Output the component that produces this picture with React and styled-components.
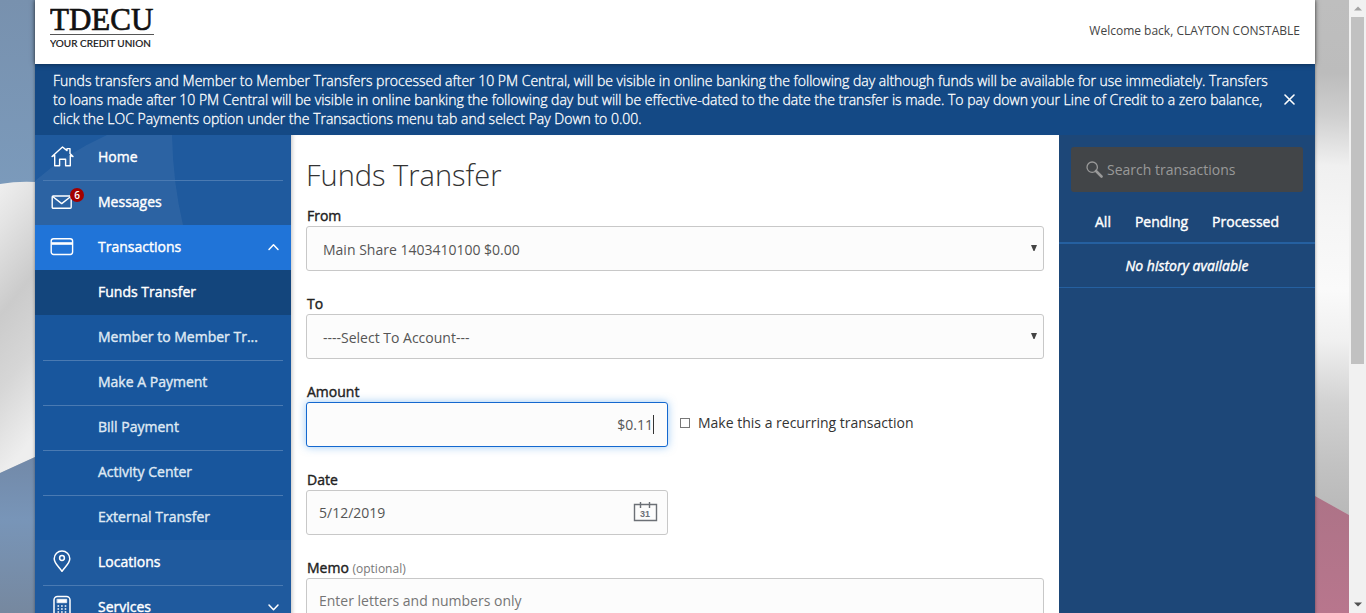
import React from "react";
import styled, { createGlobalStyle, css } from "styled-components";

const sans = '"Open Sans", "Noto Sans", sans-serif';

const GlobalStyle = createGlobalStyle`
  *, *::before, *::after { box-sizing: border-box; }
  body { margin: 0; font-family: ${sans}; font-size: 14px; line-height: 19px; color: #333; }
  button, input, select { font: inherit; color: inherit; }
  h1, p, ul { margin: 0; padding: 0; }
`;

/* ---------- page frame ---------- */

const Shell = styled.div`
  position: relative;
  display: flex;
  height: 100vh;
  overflow: hidden;
`;

const Backdrop = styled.div`
  position: absolute;
  inset: 0 17px 0 0;
  display: flex;
  justify-content: space-between;
  background: #c9c9c9;
`;

const Viewport = styled.div`
  position: relative;
  flex: 1;
  min-width: 0;
  padding: 0 34px 0 35px;
  overflow-y: auto;
  scrollbar-width: none;
`;

const Page = styled.div`
  display: flex;
  flex-direction: column;
  min-height: 100%;
  box-shadow: 0 0 3px rgba(0, 0, 0, 0.4);
`;

const ScrollBar = styled.div`
  position: relative;
  display: flex;
  flex-direction: column;
  justify-content: space-between;
  width: 17px;
  background: #f1f1f1;
`;

const ScrollButton = styled.button`
  display: flex;
  align-items: center;
  justify-content: center;
  height: 17px;
  padding: 0;
  border: 0;
  background: transparent;
`;

const ScrollTrack = styled.div`
  flex: 1;
  padding: 0 2px;
`;

const ScrollThumb = styled.div`
  height: 60%;
  background: #c1c1c1;
`;

/* ---------- header and notice ---------- */

const Header = styled.header`
  position: relative;
  z-index: 1;
  display: flex;
  align-items: center;
  justify-content: space-between;
  height: 64px;
  padding: 0 15px;
  background: #fff;
  box-shadow: 0 0 5px rgba(0, 0, 0, 0.5);
`;

const LogoLink = styled.a`
  display: block;
  align-self: flex-start;
  height: 50px;
`;

const Welcome = styled.p`
  padding-bottom: 4px;
  font-size: 12px;
  color: #444;
`;

const Notice = styled.section`
  display: flex;
  align-items: center;
  justify-content: space-between;
  padding: 7px 16px 7px 18px;
  background: #144985;
  color: #fff;
`;

const NoticeText = styled.p`
  max-width: 1216px;
  font-weight: 300;
  -webkit-text-stroke: 0.3px currentColor;
`;

const CloseButton = styled.button`
  display: flex;
  padding: 4px;
  border: 0;
  background: none;
  cursor: pointer;
`;

const Columns = styled.div`
  flex: 1;
  display: grid;
  grid-template-columns: 256px minmax(0, 1fr) 256px;
`;

/* ---------- navigation ---------- */

const Nav = styled.nav`
  position: relative;
  background: #1f5a9e;
`;

const NavArt = styled.svg`
  position: absolute;
  top: 0;
  left: 0;
`;

const NavList = styled.ul`
  position: relative;
  list-style: none;
`;

const SubList = styled.ul`
  list-style: none;
  background: #18569d;
`;

const NavItem = styled.li`
  position: relative;

  ${(p) =>
    p.$ruled &&
    css`
      &::after {
        content: "";
        position: absolute;
        right: 8px;
        bottom: -1px;
        left: 8px;
        height: 1px;
        background: #4a7ab2;
      }
    `}
`;

const navTone = {
  plain: css`background: transparent; color: #fff;`,
  open: css`background: #2074d8; color: #fff;`,
  current: css`background: #13457c; color: #fff;`,
  sub: css`background: transparent; color: #dfe8f3;`,
};

const NavLink = styled.a`
  display: flex;
  align-items: center;
  height: 45px;
  padding: 0 10px 2px 15px;
  text-decoration: none;
  ${(p) => navTone[p.$tone]}
`;

const NavIcon = styled.span`
  position: relative;
  display: flex;
  width: 24px;
  height: 24px;
  margin-right: 24px;
`;

const NavLabel = styled.span`
  flex: 1;
  -webkit-text-stroke: 0.4px currentColor;
`;

const Badge = styled.span`
  position: absolute;
  top: -2px;
  right: -10px;
  width: 14px;
  height: 14px;
  border-radius: 50%;
  background: #a30000;
  color: #fff;
  font-size: 10px;
  font-weight: 600;
  line-height: 14px;
  text-align: center;
`;

/* ---------- transfer form ---------- */

const Main = styled.main`
  padding: 20px 15px;
  background: #fff;
  box-shadow: inset 4px 0 4px -3px rgba(0, 0, 0, 0.25);
`;

const Title = styled.h1`
  margin-bottom: 12px;
  font-size: 29px;
  font-weight: 300;
  line-height: 39px;
`;

const Field = styled.div`
  display: flex;
  flex-direction: column;
  margin-bottom: 23px;
  ${(p) => p.$half && css`width: calc(50% - 7px);`}
`;

const FieldRow = styled.div`
  display: flex;
  gap: 12px;
`;

const Label = styled.label`
  height: 20px;
  padding-left: 1px;
  line-height: 20px;
  color: #222;
  -webkit-text-stroke: 0.4px currentColor;
`;

const Optional = styled.span`
  font-size: 12px;
  color: #777;
  -webkit-text-stroke: 0;
`;

const Control = styled.div`
  position: relative;
  display: flex;
`;

const boxStyle = css`
  width: 100%;
  height: 45px;
  border: 1px solid #c8c8c8;
  border-radius: 3px;
  background: #fcfcfc;
  color: #555;
  outline: none;
`;

const Select = styled.select`
  ${boxStyle}
  appearance: none;
  padding: 1px 16px 0;
`;

const SelectArrow = styled.svg`
  position: absolute;
  top: 19px;
  right: 7px;
  pointer-events: none;
`;

const TextInput = styled.input`
  ${boxStyle}
  padding: 0 12px;
  &::placeholder { color: #757575; opacity: 1; }
`;

const AmountInput = styled(TextInput)`
  padding-right: 14px;
  border-color: #1468cf;
  box-shadow: 0 0 8px rgba(60, 150, 235, 0.5);
  text-align: right;
  caret-color: transparent;
`;

const Caret = styled.span`
  position: absolute;
  top: 13px;
  right: 14px;
  width: 1px;
  height: 19px;
  background: #333;
`;

const CalendarButton = styled.button`
  position: absolute;
  top: 10px;
  right: 10px;
  padding: 0;
  border: 0;
  background: none;
  line-height: 0;
  cursor: pointer;
`;

const CheckLabel = styled.label`
  display: flex;
  align-items: center;
  gap: 8px;
  align-self: flex-start;
  height: 45px;
  margin-top: 18px;
`;

const Checkbox = styled.input`
  appearance: none;
  width: 10px;
  height: 10px;
  margin: 0;
  border: 1px solid #777;
  background: #fff;
`;

/* ---------- history ---------- */

const History = styled.aside`
  background: #1d4778;
  color: #fff;
`;

const SearchBox = styled.label`
  display: flex;
  align-items: center;
  gap: 4px;
  height: 45px;
  margin: 12px 12px 8px;
  padding: 0 15px;
  border-radius: 3px;
  background: #424548;
`;

const SearchInput = styled.input`
  flex: 1;
  min-width: 0;
  padding: 0;
  border: 0;
  outline: none;
  background: transparent;
  &::placeholder { color: #999; opacity: 1; }
`;

const Tabs = styled.div`
  display: flex;
  justify-content: center;
  gap: 24px;
  height: 44px;
  border-bottom: 2px solid #2560a0;
`;

const Tab = styled.button`
  padding: 0;
  border: 0;
  background: none;
  -webkit-text-stroke: 0.4px currentColor;
  cursor: pointer;
`;

const Empty = styled.p`
  height: 44px;
  border-bottom: 1px solid #2560a0;
  font-style: italic;
  line-height: 44px;
  text-align: center;
  -webkit-text-stroke: 0.4px currentColor;
`;

/* ---------- drawings ---------- */

const LeftScene = () => (
  <svg width="35" height="613" viewBox="0 0 35 613" aria-hidden="true">
    <defs>
      <linearGradient id="sky" x1="0" y1="0" x2="0" y2="1">
        <stop offset="0" stopColor="#7891ae" />
        <stop offset="1" stopColor="#7b9abb" />
      </linearGradient>
      <linearGradient id="cloth" x1="0" y1="0" x2="0.15" y2="1">
        <stop offset="0" stopColor="#efefef" />
        <stop offset="0.15" stopColor="#e4e4e4" />
        <stop offset="0.45" stopColor="#cbcbcb" />
        <stop offset="0.7" stopColor="#d6d6d6" />
        <stop offset="1" stopColor="#eeeeee" />
      </linearGradient>
      <linearGradient id="dusk" x1="0" y1="0" x2="0" y2="1">
        <stop offset="0" stopColor="#7289a8" />
        <stop offset="0.4" stopColor="#7895b8" />
        <stop offset="1" stopColor="#76889f" />
      </linearGradient>
    </defs>
    <path d="M0 0H35V184H0Z" fill="url(#sky)" />
    <path d="M0 184Q18 181 35 182V457L0 473Z" fill="url(#cloth)" />
    <path d="M0 473L35 457V613H0Z" fill="url(#dusk)" />
  </svg>
);

const RightScene = () => (
  <svg width="34" height="613" viewBox="0 0 34 613" aria-hidden="true">
    <defs>
      <linearGradient id="fold" gradientUnits="userSpaceOnUse" x1="0" y1="0" x2="-20" y2="515">
        <stop offset="0" stopColor="#bebebe" />
        <stop offset="0.14" stopColor="#bcbcbc" />
        <stop offset="0.22" stopColor="#cecece" />
        <stop offset="0.32" stopColor="#f0f0f0" />
        <stop offset="0.42" stopColor="#f5f5f5" />
        <stop offset="0.56" stopColor="#fafafa" />
        <stop offset="0.66" stopColor="#f0f0f0" />
        <stop offset="0.78" stopColor="#d2d2d2" />
        <stop offset="0.9" stopColor="#c2c2c2" />
        <stop offset="1" stopColor="#b8b8b8" />
      </linearGradient>
      <linearGradient id="rose" x1="0" y1="0" x2="0" y2="1">
        <stop offset="0" stopColor="#ad7387" />
        <stop offset="1" stopColor="#b8768d" />
      </linearGradient>
    </defs>
    <path d="M0 0H34V515L0 496Z" fill="url(#fold)" />
    <path d="M0 496L34 515V613H0Z" fill="url(#rose)" />
  </svg>
);

const Logo = () => (
  <svg width="106" height="50" viewBox="0 0 106 50" role="img" aria-label="TDECU Your Credit Union">
    <text x="0" y="30" fontFamily="Liberation Serif, serif" fontSize="31" fill="#111" stroke="#111" strokeWidth="0.7">TDECU</text>
    <path d="M0 34.5H104" stroke="#555" />
    <text x="0" y="47" fontFamily="Lato, sans-serif" fontSize="10" fill="#111" stroke="#111" strokeWidth="0.2">YOUR CREDIT UNION</text>
  </svg>
);

const line = { fill: "none", stroke: "#fff", strokeWidth: 1.4, strokeLinejoin: "round", strokeLinecap: "round" };

const HomeIcon = () => (
  <svg width="24" height="24" viewBox="0 0 24 24" {...line}>
    <path d="M4.7 10.2L2 11.5L12.5 2L17 5.6V3.6H20V8.4L23 11.5L20.3 10.5V20.7H15.6V14.3H9.6V20.7H4.7V10.2" />
  </svg>
);

const MailIcon = () => (
  <svg width="24" height="24" viewBox="0 0 24 24" {...line}>
    <rect x="2.2" y="6" width="19" height="12.2" rx="1" />
    <path d="M3 6.8L11.7 13.6L20.5 6.8" />
  </svg>
);

const CardIcon = () => (
  <svg width="24" height="24" viewBox="0 0 24 24" {...line}>
    <rect x="1.2" y="3.7" width="21.4" height="15.8" rx="2.4" />
    <path d="M1.5 8.5H22.5" strokeWidth="2.6" strokeLinecap="butt" />
  </svg>
);

const PinIcon = () => (
  <svg width="24" height="24" viewBox="0 0 24 24" {...line} strokeWidth="1.5">
    <path d="M12 21.3C9.3 17 4.2 13.4 4.2 8.7A7.8 7.6 0 0 1 19.8 8.7C19.8 13.4 14.7 17 12 21.3Z" />
    <circle cx="12" cy="8" r="2.4" />
  </svg>
);

const CalculatorIcon = () => (
  <svg width="24" height="24" viewBox="0 0 24 24" {...line} strokeWidth="1.5">
    <rect x="4" y="1.5" width="16" height="21" rx="3.5" />
    <path d="M7.2 4.2H16.8V7.8H7.2Z" fill="#fff" strokeWidth="0.5" />
    <path d="M7.5 11H17M7.5 14H17M7.5 17H17M7.5 19.8H17" strokeWidth="1.6" strokeDasharray="1.6 2" strokeLinecap="butt" />
  </svg>
);

const Chevron = ({ up }) => (
  <svg width="15" height="10" viewBox="0 0 15 10" {...line} strokeWidth="1.5" aria-hidden="true">
    <path d={up ? "M3 7.5L7.5 2.7L12 7.5" : "M3 3L7.5 7.8L12 3"} />
  </svg>
);

const CloseIcon = () => (
  <svg width="11" height="11" viewBox="0 0 11 11" {...line} strokeWidth="1.6" aria-hidden="true">
    <path d="M1 1L10 10M10 1L1 10" />
  </svg>
);

const CalendarIcon = () => (
  <svg width="25" height="23" viewBox="0 0 25 23" aria-hidden="true">
    <path d="M1.5 4.5H23.5V20.5H1.5Z" fill="none" stroke="#6c7076" strokeWidth="1.4" />
    <path d="M7.5 2V8M16.5 2V8" stroke="#6c7076" strokeWidth="1.4" />
    <text x="12" y="17" textAnchor="middle" fontFamily="Liberation Sans, sans-serif" fontSize="9" fontWeight="700" fill="#6c7076">31</text>
  </svg>
);

const SearchIcon = () => (
  <svg width="17" height="18" viewBox="0 0 17 18" fill="none" stroke="#999" aria-hidden="true">
    <circle cx="6.2" cy="6.2" r="5.2" strokeWidth="1.3" />
    <path d="M10 10L15.5 15.5" strokeWidth="2.6" strokeLinecap="round" />
  </svg>
);

const Triangle = ({ up, color }) => (
  <svg width="8" height="5" viewBox="0 0 8 5" aria-hidden="true">
    <path d={up ? "M0 4.5H8L4 0.5Z" : "M0 0.5H8L4 4.5Z"} fill={color} />
  </svg>
);

/* ---------- data and parts ---------- */

const topItems = [
  { label: "Home", icon: <HomeIcon />, ruled: true },
  { label: "Messages", icon: <MailIcon />, badge: 6 },
];

const transactionItems = [
  { label: "Funds Transfer", tone: "current" },
  { label: "Member to Member Tr...", tone: "sub", ruled: true },
  { label: "Make A Payment", tone: "sub", ruled: true },
  { label: "Bill Payment", tone: "sub", ruled: true },
  { label: "Activity Center", tone: "sub", ruled: true },
  { label: "External Transfer", tone: "sub" },
];

const lowerItems = [
  { label: "Locations", icon: <PinIcon />, ruled: true },
  { label: "Services", icon: <CalculatorIcon />, chevron: "down" },
];

function NavEntry({ item, children }) {
  return (
    <NavItem $ruled={item.ruled}>
      <NavLink href="#" $tone={item.tone || "plain"}>
        <NavIcon>
          {item.icon}
          {item.badge && <Badge>{item.badge}</Badge>}
        </NavIcon>
        <NavLabel>{item.label}</NavLabel>
        {item.chevron && <Chevron up={item.chevron === "up"} />}
      </NavLink>
      {children}
    </NavItem>
  );
}

function SelectField({ id, label, option }) {
  return (
    <Field>
      <Label htmlFor={id}>{label}</Label>
      <Control>
        <Select id={id}>
          <option>{option}</option>
        </Select>
        <SelectArrow width="6" height="6" viewBox="0 0 6 6" aria-hidden="true">
          <path d="M0 0H6L3.5 6H2.5Z" fill="#444" />
        </SelectArrow>
      </Control>
    </Field>
  );
}

export default function App() {
  return (
    <>
      <GlobalStyle />
      <Shell>
        <Backdrop>
          <LeftScene />
          <RightScene />
        </Backdrop>
        <Viewport>
          <Page>
            <Header>
              <LogoLink href="#"><Logo /></LogoLink>
              <Welcome>Welcome back, CLAYTON CONSTABLE</Welcome>
            </Header>
            <Notice>
              <NoticeText>
                Funds transfers and Member to Member Transfers processed after 10 PM Central, will be visible in
                online banking the following day although funds will be available for use immediately. Transfers to
                loans made after 10 PM Central will be visible in online banking the following day but will be
                effective-dated to the date the transfer is made. To pay down your Line of Credit to a zero balance,
                click the LOC Payments option under the Transactions menu tab and select Pay Down to 0.00.
              </NoticeText>
              <CloseButton aria-label="Dismiss notice"><CloseIcon /></CloseButton>
            </Notice>
            <Columns>
              <Nav>
                <NavArt width="150" height="90" viewBox="0 0 150 90" aria-hidden="true">
                  <path d="M0 46Q32 18 72 0H137Q138 48 148 90H0Z" fill="#fff" fillOpacity="0.06" />
                </NavArt>
                <NavList>
                  {topItems.map((item) => <NavEntry key={item.label} item={item} />)}
                  <NavEntry item={{ label: "Transactions", icon: <CardIcon />, tone: "open", chevron: "up" }}>
                    <SubList>
                      {transactionItems.map((item) => <NavEntry key={item.label} item={item} />)}
                    </SubList>
                  </NavEntry>
                  {lowerItems.map((item) => <NavEntry key={item.label} item={item} />)}
                </NavList>
              </Nav>
              <Main>
                <Title>Funds Transfer</Title>
                <SelectField id="from" label="From" option="Main Share 1403410100 $0.00" />
                <SelectField id="to" label="To" option="----Select To Account---" />
                <FieldRow>
                  <Field $half>
                    <Label htmlFor="amount">Amount</Label>
                    <Control>
                      <AmountInput id="amount" defaultValue="$0.11" />
                      <Caret />
                    </Control>
                  </Field>
                  <CheckLabel>
                    <Checkbox type="checkbox" />
                    Make this a recurring transaction
                  </CheckLabel>
                </FieldRow>
                <Field $half>
                  <Label htmlFor="date">Date</Label>
                  <Control>
                    <TextInput id="date" defaultValue="5/12/2019" />
                    <CalendarButton aria-label="Choose date"><CalendarIcon /></CalendarButton>
                  </Control>
                </Field>
                <Field>
                  <Label htmlFor="memo">Memo <Optional>(optional)</Optional></Label>
                  <Control>
                    <TextInput id="memo" placeholder="Enter letters and numbers only" />
                  </Control>
                </Field>
              </Main>
              <History>
                <SearchBox>
                  <SearchIcon />
                  <SearchInput placeholder="Search transactions" aria-label="Search transactions" />
                </SearchBox>
                <Tabs>
                  <Tab>All</Tab>
                  <Tab>Pending</Tab>
                  <Tab>Processed</Tab>
                </Tabs>
                <Empty>No history available</Empty>
              </History>
            </Columns>
          </Page>
        </Viewport>
        <ScrollBar>
          <ScrollButton aria-label="Scroll up"><Triangle up color="#a3a3a3" /></ScrollButton>
          <ScrollTrack><ScrollThumb /></ScrollTrack>
          <ScrollButton aria-label="Scroll down"><Triangle color="#505050" /></ScrollButton>
        </ScrollBar>
      </Shell>
    </>
  );
}
